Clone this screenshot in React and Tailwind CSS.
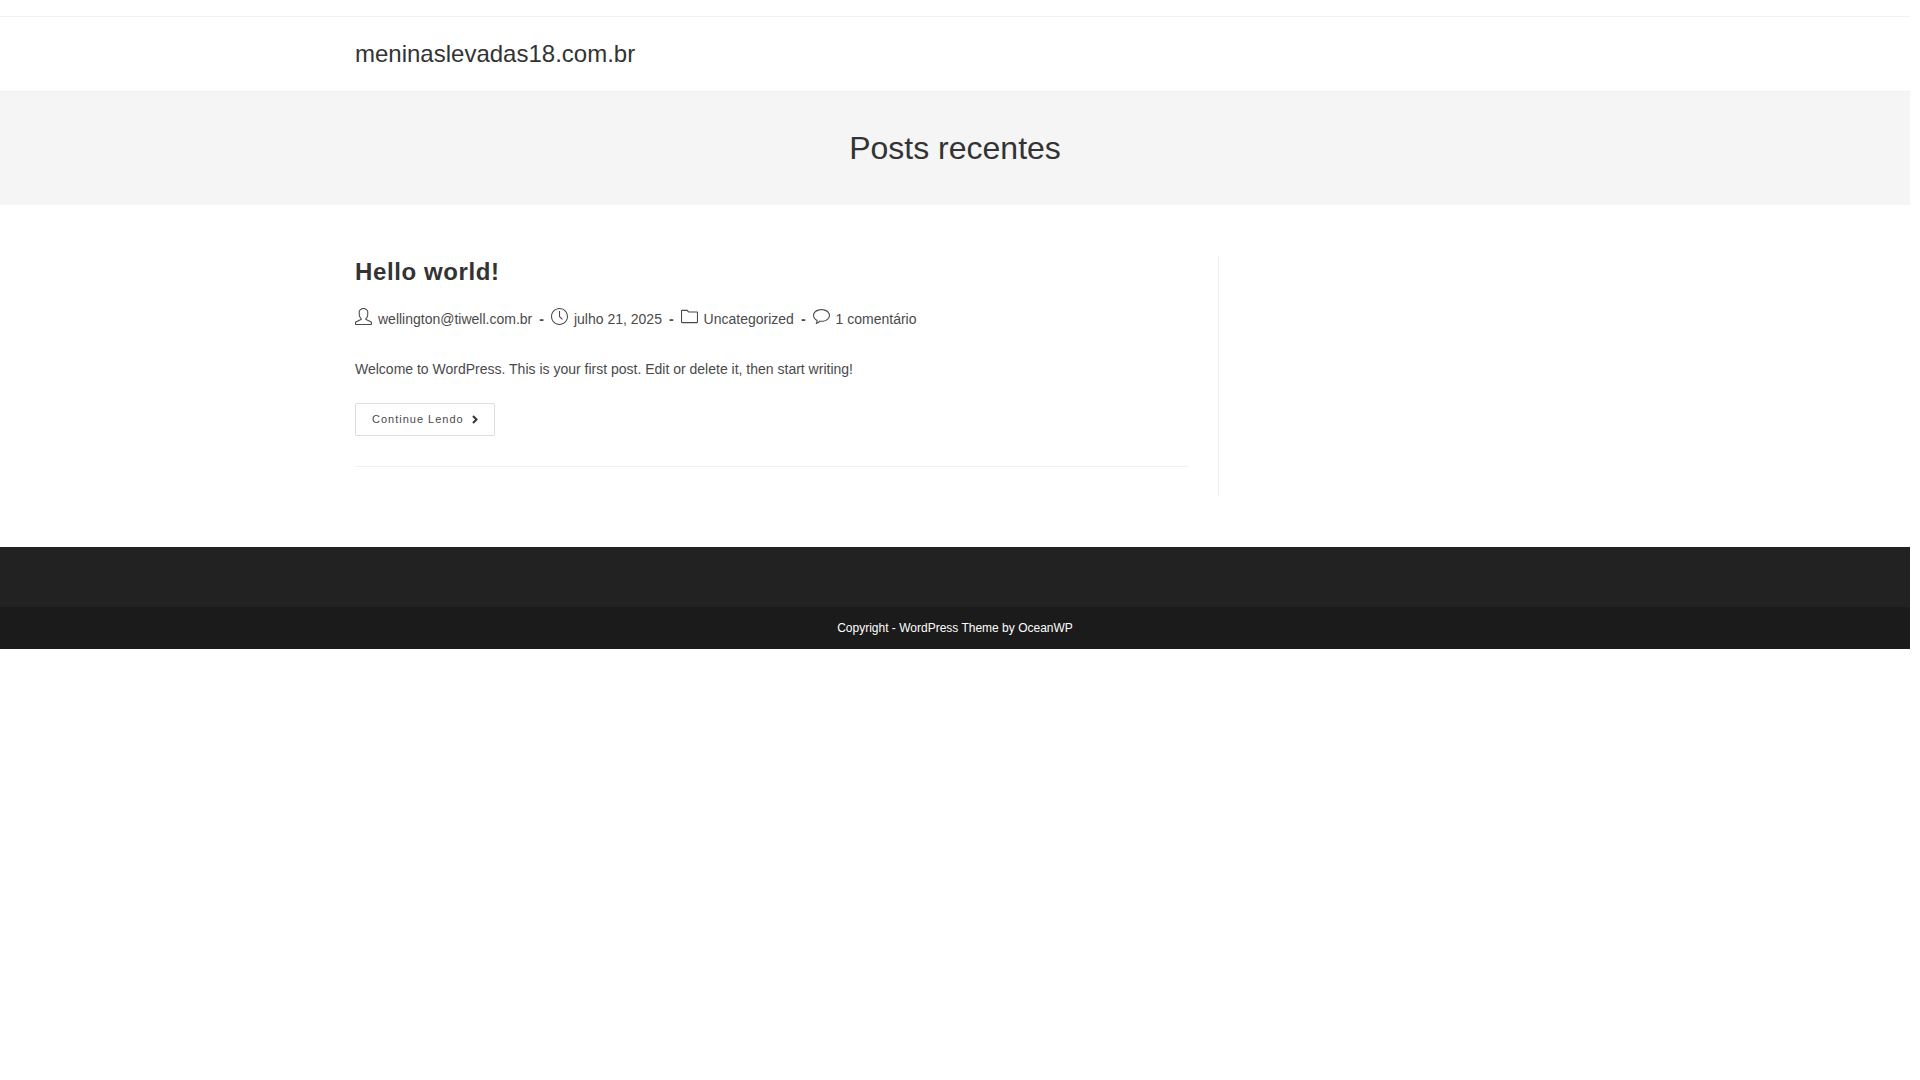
import React from "react";
import { SlBubble, SlClock, SlFolder, SlUser } from "react-icons/sl";

const meta = [
  { icon: SlUser, text: "wellington@tiwell.com.br", link: true },
  { icon: SlClock, text: "julho 21, 2025" },
  { icon: SlFolder, text: "Uncategorized", link: true },
  { icon: SlBubble, text: "1 comentário", link: true },
];

const Header = () => {
  return (
    <header>
      <div className="h-4" />
      <div className="border-y border-[#f1f1f1]">
        <div className="max-w-[1200px] mx-auto">
          <a
            href="#"
            className="inline-block align-top text-2xl leading-[74px] text-[#333]"
          >
            meninaslevadas18.com.br
          </a>
        </div>
      </div>
    </header>
  );
};

const PostMeta = () => {
  return (
    <ul className="flex flex-wrap mt-[18px] leading-[25px]">
      {meta.map((item, index) => (
        <li key={item.text} className="flex">
          <item.icon className="w-[17px] h-[17px] mt-px mr-1.5" />
          {item.link ? <a href="#">{item.text}</a> : <span>{item.text}</span>}
          {index < meta.length - 1 && (
            <span className="px-[7px] font-bold">-</span>
          )}
        </li>
      ))}
    </ul>
  );
};

const Post = () => {
  return (
    <article className="border-b border-[#f1f1f1] pb-[30px] mb-[30px]">
      <h2 className="text-2xl leading-[34px] font-bold tracking-wide text-[#333]">
        <a href="#">Hello world!</a>
      </h2>
      <PostMeta />
      <p className="mt-[25px] leading-[25px]">
        Welcome to WordPress. This is your first post. Edit or delete it, then
        start writing!
      </p>
      <a
        href="#"
        className="inline-flex items-center align-top mt-[21px] h-[33px] px-4 border border-[#ddd] rounded-xs text-[11px] tracking-[1px]"
      >
        Continue Lendo
        <svg
          viewBox="0 0 6 9"
          className="ml-2 w-1.5 h-[9px] fill-none stroke-[#333] stroke-2"
        >
          <path d="M1 1l3.5 3.5L1 8" />
        </svg>
      </a>
    </article>
  );
};

const Footer = () => {
  return (
    <footer>
      <div className="h-[60px] bg-[#222]" />
      <div className="bg-[#1b1b1b] py-[15px] text-center text-xs leading-3 text-white">
        Copyright - WordPress Theme by OceanWP
      </div>
    </footer>
  );
};

const App = () => {
  return (
    <div className="mr-2.5 bg-white font-['Liberation_Sans',Arial,sans-serif] text-sm text-[#4a4a4a]">
      <Header />
      <div className="bg-[#f5f5f5] py-[34px] text-center">
        <h1 className="text-[32px] leading-[45px] text-[#333]">
          Posts recentes
        </h1>
      </div>
      <main className="max-w-[1200px] mx-auto py-[50px]">
        <div className="flow-root w-[72%] pr-[30px] border-r border-[#f1f1f1]">
          <Post />
        </div>
      </main>
      <Footer />
    </div>
  );
};

export default App;
